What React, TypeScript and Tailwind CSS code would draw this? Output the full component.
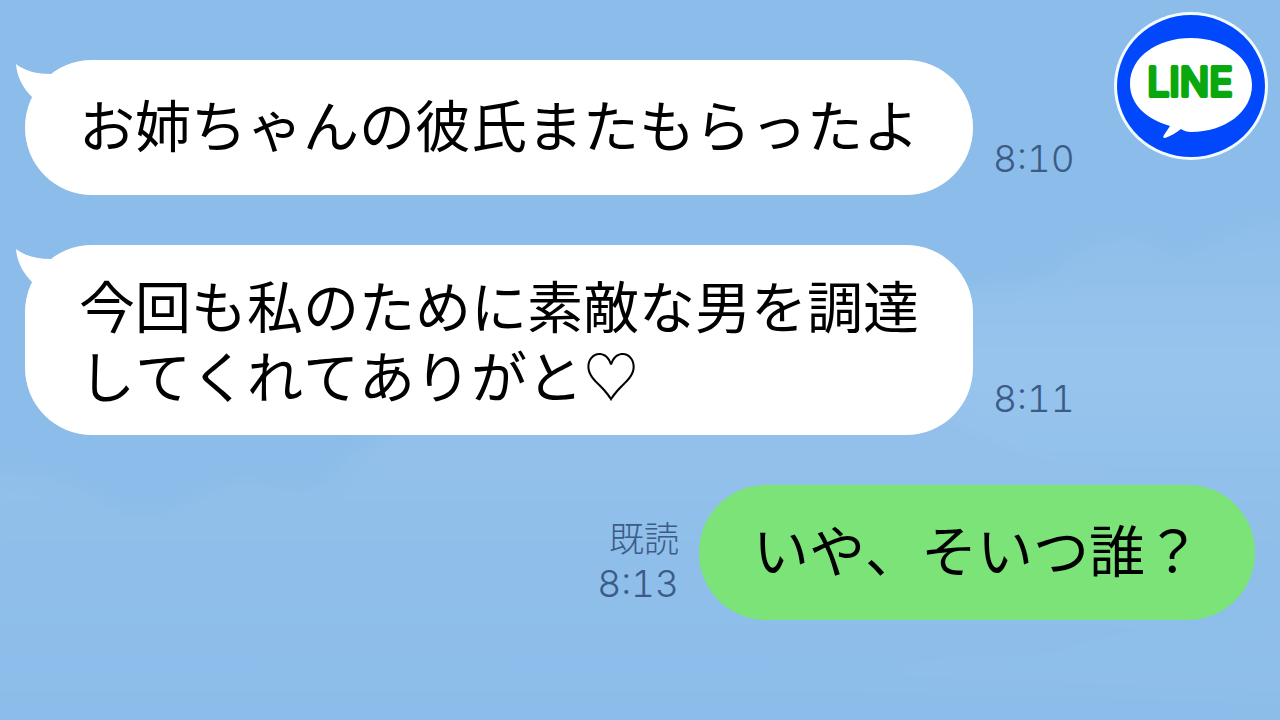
import React from 'react';

interface Message {
  id: number;
  mine: boolean;
  text: string;
  time: string;
  read?: boolean;
}

const MESSAGES: Message[] = [
  { id: 1, mine: false, text: 'お姉ちゃんの彼氏またもらったよ', time: '8:10' },
  { id: 2, mine: false, text: '今回も私のために素敵な男を調達\nしてくれてありがと♡', time: '8:11' },
  { id: 3, mine: true, text: 'いや、そいつ誰？', time: '8:13', read: true },
];

const Sky = () => (
  <svg className="absolute inset-0 w-full h-full" viewBox="0 0 1280 720" preserveAspectRatio="none" aria-hidden="true">
    <defs>
      <linearGradient id="cloud" x1="0" y1="0" x2="0" y2="1">
        <stop offset="0" stopColor="#93c1eb" />
        <stop offset="0.9" stopColor="#8cbce9" />
      </linearGradient>
      <linearGradient id="cloudBright" x1="0" y1="0" x2="0" y2="1">
        <stop offset="0" stopColor="#8ebeea" />
        <stop offset="0.5" stopColor="#97c4ed" />
        <stop offset="1" stopColor="#8fbfea" />
      </linearGradient>
      <filter id="soft">
        <feGaussianBlur stdDeviation="8" />
      </filter>
    </defs>
    <g filter="url(#soft)">
      <path fill="url(#cloudBright)" d="M940 300 C980 275 1020 290 1050 275 C1090 235 1140 220 1175 260 C1220 245 1250 215 1300 215 L1300 520 L940 520 Z" />
      <path fill="url(#cloud)" d="M-20 475 C40 465 80 485 120 510 C150 525 180 505 220 487 C260 478 290 495 325 485 C350 450 390 425 460 400 L940 400 C1000 470 1150 500 1300 480 L1300 740 L-20 740 Z" />
      <path fill="#90bfea" d="M860 680 C930 640 990 665 1060 650 C1130 625 1200 650 1300 620 L1300 700 Z" opacity="0.5" />
    </g>
  </svg>
);

const LineLogo = () => (
  <svg className="w-[156px] h-[150px]" viewBox="0 0 156 150" role="img" aria-label="LINE">
    <ellipse cx="79" cy="75" rx="77" ry="74" fill="#f2fbff" />
    <ellipse cx="79" cy="75" rx="74" ry="71" fill="#0148fc" />
    <path
      fill="#fff"
      d="M79 27 C113 27 140 47 140 74 C140 101 113 121 79 121 C75 121 72 120 69 118 C64 122 59 125 53 127 Q50 127 52 124 L58 115 C34 108 18 93 18 73 C18 46 45 27 79 27 Z"
    />
    <text
      x="78"
      y="85"
      textAnchor="middle"
      className="font-['Inter'] text-[39px] font-normal"
      fill="#0aa80f"
      stroke="#0aa80f"
      strokeWidth="4"
      strokeLinejoin="round"
    >
      LINE
    </text>
  </svg>
);

const Bubble = ({ message }: { message: Message }) => {
  const { mine, text } = message;
  const multiline = text.includes('\n');

  return (
    <div
      className={`relative px-[54px] text-[56px] leading-[70px] text-black rounded-[67px] ${
        mine ? 'bg-[#7be378]' : 'bg-white'
      } ${multiline ? 'pt-6 pb-[26px]' : 'pt-7 pb-[37px]'}`}
    >
      {!mine && (
        <svg className="absolute -left-[10px] top-1 w-10 h-10" viewBox="0 0 40 40" aria-hidden="true">
          <path fill="#fff" d="M1 0 C10 7 22 10 36 10 L36 34 L17 33 C8 24 2 13 1 0 Z" />
        </svg>
      )}
      <p className="whitespace-pre [font-kerning:none]">{text}</p>
    </div>
  );
};

const MessageRow = ({ message }: { message: Message }) => (
  <li className={`flex items-end gap-5 ${message.mine ? 'flex-row-reverse' : ''}`}>
    <Bubble message={message} />
    <div className="pb-[13px] text-right text-[#3b5c88]">
      {message.read && <p className="text-[35px] leading-[48px] font-light">既読</p>}
      <time className="block font-['Inter'] text-[37px] leading-[46px] font-light tabular-nums">{message.time}</time>
    </div>
  </li>
);

const App: React.FC = () => {
  return (
    <main className="relative min-h-screen overflow-hidden bg-[#8cbce9] font-['Noto_Sans_CJK_JP',sans-serif]">
      <Sky />
      <ul className="relative flex flex-col gap-[50px] pt-[60px] px-[25px]">
        {MESSAGES.map((message) => (
          <MessageRow key={message.id} message={message} />
        ))}
      </ul>
      <div className="absolute top-[11px] right-3">
        <LineLogo />
      </div>
    </main>
  );
};

export default App;
